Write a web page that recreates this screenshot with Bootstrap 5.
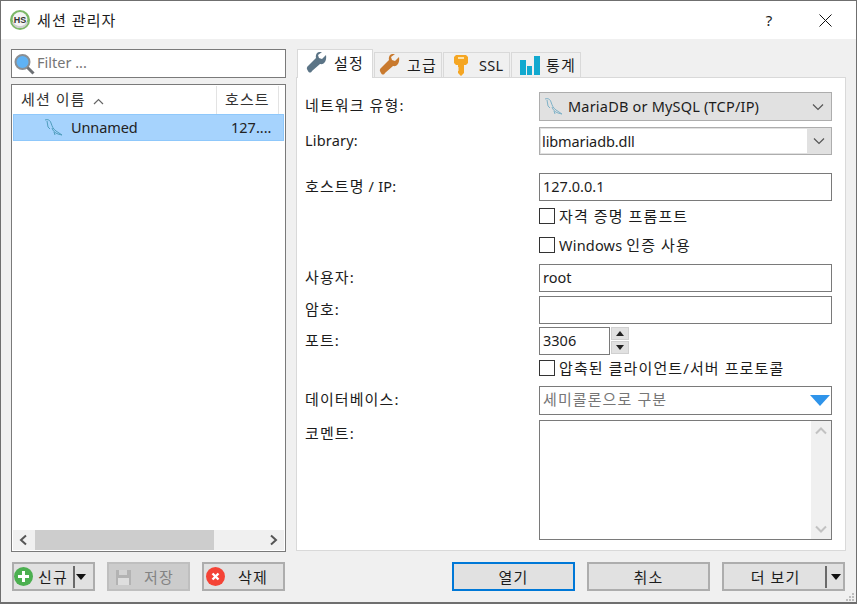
<!DOCTYPE html>
<html lang="ko"><head><meta charset="utf-8"><title>세션 관리자</title>
<link href="https://cdn.jsdelivr.net/npm/bootstrap@5.3.0/dist/css/bootstrap.min.css" rel="stylesheet">
<style>
html,body{height:100%;margin:0;background:#f0f0f0}
body{font:14.5px/20px "Noto Sans","Noto Sans CJK KR",sans-serif;color:#1c1c1c;overflow:hidden}
.ko{font-size:15px;letter-spacing:1.1px}
.win{width:857px;height:604px;border:1px solid #6f6f6f;border-bottom-width:2px;background:#f0f0f0;position:relative}
.ttl{height:38px;background:#fff;padding:0 0 0 9px}
.ttl .hlp{margin-left:auto;width:18px;text-align:center;font-size:15px}
.ttl .cls{margin:0 24px 0 41px}
.ttl .lg{margin-right:7px}
.main{padding:10px 10px 0 10px;gap:10px;height:512px}
.lft{width:275px}
.flt{height:29px;border:1px solid #7a7a7a;background:#fff;padding:0 0 3px 1px;gap:2px;color:#767676}
.flt svg{margin-bottom:-3px}
.tree{height:468px;margin-top:6px;border:1px solid #7a7a7a;background:#fff;padding:1px}
.thd{height:28px;color:#333}
.thd>div{border-right:1px solid #e3e3e3;height:28px;line-height:27px}
.thd .c1{width:204px;padding-left:8px}
.thd .c2{width:62px;padding-left:8px}
.sel{height:27px;background:#a6d3fd;border:1px solid #8fc8fb;padding:0 0 0 30px;color:#222;letter-spacing:-.1px}
.sel .nm{width:160px;margin-left:7px;padding-bottom:2px}
.sel .hs{padding-bottom:2px;letter-spacing:0}
.tsp{flex:1}
.hsb{height:20px;background:#f0f0f0;padding:0 6px}
.hsb i{display:block;width:179px;height:20px;background:#cdcdcd;margin-left:7px;margin-right:auto}
.rgt{width:550px}
.nav-tabs.tb{border-bottom:0;height:28px;align-items:flex-end;padding-left:1px;gap:1px;position:relative;z-index:1}
.tb .nav-link{height:25px;padding:0 0 0 4px;margin:0;border:1px solid #d9d9d9;border-bottom:0;border-radius:0;background:#f0f0f0;color:#1c1c1c;display:flex;align-items:center;gap:6px;font-size:14.5px;letter-spacing:.3px}
.tb .nav-link.active{height:29px;background:#fff;color:#1c1c1c;padding:0 0 3px 8px;margin-bottom:-1px;border-color:#d9d9d9}
.w1{width:76px}.w2{width:68px}.w3{width:67px}.w4{width:70px}
.w3 .nav-link{gap:5px}
.tb .nav-link.lnk{width:100%}
.pg{height:474px;background:#fff;border:1px solid #d9d9d9;padding:14px 0 0 8px;display:grid;grid-template-columns:234px 293px;grid-template-rows:35px 46px 35px 29px 27px 32px 31px 33px 26px 34px 120px;letter-spacing:.2px}
.lb{line-height:20px;margin-top:3px}
.fc.form-control{height:28px;border:1px solid #7a7a7a;border-radius:0;padding:0 3px 2px;font-size:14.5px;line-height:24px;color:#1c1c1c;box-shadow:none}
.cmbA{height:29px;background:#e1e1e1;border:1px solid #adadad;padding:0 5px 0 4px;gap:4px}
.cmbA span{padding-bottom:1px}
.cmbB{height:28px;background:#e1e1e1;border:1px solid #adadad;padding:1px}
.cmbB span{background:#fff;flex:1;height:24px;line-height:24px;padding-left:1px;letter-spacing:-.1px}
.cmbB svg{margin:0 5px 0 6px}
.cmbA svg:last-child{margin-left:auto;margin-right:2px}
.fc.form-control.pt{width:71px}
.spn{width:18px;height:28px;margin-left:1px;gap:1px}
.spn b{display:flex;align-items:center;justify-content:center;height:13px;width:18px;background:#e1e1e1;border:1px solid #d0d0d0}
.ck{gap:4px;height:16px;line-height:16px}
.ck .form-check-input{width:16px;height:16px;margin:0;border:1px solid #333;border-radius:0;flex:none}
.db{height:29px;border:1px solid #7a7a7a;color:#767676;padding:0 1px 3px 3px}
.db svg{margin-left:auto;margin-bottom:-3px}
.cmt{height:120px;border:1px solid #7a7a7a;background:#fff;justify-content:flex-end}
.vsb{width:20px;background:#f0f0f0;height:100%;justify-content:space-between;padding:6px 0}
.bbar{padding:11px 11px 0 11px;height:40px}
.bt.btn{height:29px;width:83px;border:2px solid #adadad;border-radius:0;background:#e1e1e1;color:#1c1c1c;font-size:14.5px;line-height:20px;padding:0 2px;display:flex;align-items:center;white-space:nowrap;--bs-btn-hover-bg:#e1e1e1}
.bt.btn.tight{padding:0}
.bt svg{flex:none}
.bt.wd{width:123px;justify-content:center}
.bt.dfl{border-color:#0078d7;margin-left:167px}
.bt.dis{background:#ccc;border-color:#bfbfbf;color:#838383;opacity:1}
.dv{width:2px;height:22px;background:#6a6a6a;flex:none}
.dvn{margin:0 1px 0 5px}
.gl{margin-left:12px}
.ms-new{margin-left:5px}
.grip{position:absolute;right:1px;bottom:0}
</style></head><body>
<div class="win">
<div class="ttl d-flex align-items-center">
<svg width="20" height="20" viewBox="0 0 19 19" class="lg"><circle cx="9.5" cy="9.5" r="9.5" fill="#7cb867"/><circle cx="9.5" cy="9" r="7" fill="#f4f4f4"/><path d="M2 12a8 8 0 0 0 15 0l-1-1a7 7 0 0 1-13 0z" fill="#cfcfcf"/><text x="9.5" y="12.4" font-size="8.5" font-weight="700" text-anchor="middle" fill="#333" font-family="Liberation Sans">HS</text></svg>
<span class="ko">세션 관리자</span>
<span class="hlp">?</span>
<svg class="cls" width="13" height="13" viewBox="0 0 13 13"><path d="M.5.5l12 12M12.5.5l-12 12" stroke="#111" stroke-width="1" fill="none"/></svg>
</div>
<div class="main d-flex">
<div class="lft">
<div class="flt d-flex align-items-center">
<svg width="22" height="24" viewBox="0 0 22 24"><circle cx="9.5" cy="10" r="7" fill="#5fb2f4" stroke="#8a8f94" stroke-width="2"/><path d="M14.5 15.5l6 6" stroke="#6c7074" stroke-width="3"/></svg>
<span>Filter ...</span></div>
<div class="tree d-flex flex-column">
<div class="thd d-flex">
<div class="c1"><span class="ko">세션 이름</span> <svg class="ms-1" width="11" height="7" viewBox="0 0 11 7"><path d="M1 6l4.500-4.500L10 6" stroke="#666" stroke-width="1.200" fill="none"/></svg></div>
<div class="c2"><span class="ko">호스트</span></div></div>
<div class="sel d-flex align-items-center">
<svg width="20" height="20" viewBox="0 0 20 20"><path d="M1 2c3-1 5 0 6 3 1 3 2 6 5 8l6 4-4-1c-3-1-5-3-6-6M3 3l1 6 2 2M10 14l1 3" stroke="#4f9dbd" stroke-width="1" fill="none"/></svg>
<span class="nm">Unnamed</span><span class="hs">127....</span></div>
<div class="tsp"></div>
<div class="hsb d-flex align-items-center">
<svg width="9" height="12" viewBox="0 0 9 12"><path d="M7 1.500L2 6l5 4.500" stroke="#555" stroke-width="2" fill="none"/></svg><i></i>
<svg width="9" height="12" viewBox="0 0 9 12"><path d="M2 1.500L7 6l-5 4.500" stroke="#555" stroke-width="2" fill="none"/></svg></div>
</div></div>
<div class="rgt">
<ul class="nav nav-tabs tb">
<li class="nav-item w1"><a class="nav-link lnk active" href="#"><svg width="22" height="22" viewBox="0 0 22 22"><path d="M20 3l-4 4-3-1-1-3 4-3c-4-1-7 2-6 6L2 14c-2 2-1 3 0 5s3 2 4 0l8-7c4 1 7-3 6-9z" fill="#5b7486"/></svg><span class="ko">설정</span></a></li>
<li class="nav-item w2"><a class="nav-link lnk" href="#"><svg width="22" height="22" viewBox="0 0 22 22"><path d="M20 3l-4 4-3-1-1-3 4-3c-4-1-7 2-6 6L2 14c-2 2-1 3 0 5s3 2 4 0l8-7c4 1 7-3 6-9z" fill="#c97a2e"/></svg><span class="ko">고급</span></a></li>
<li class="nav-item w3"><a class="nav-link lnk" href="#"><svg class="ms-1" width="18" height="22" viewBox="0 0 18 22"><path d="M2 3l2-2h10l2 2v6l-2 2h-2v8l-3 3-3-3v-2l1-1-1-1 1-1-1-1v-2H4L2 9z" fill="#f5a623"/><rect x="6" y="3" width="6" height="2" fill="#fde2a8"/></svg><span>&nbsp;SSL</span></a></li>
<li class="nav-item w4"><a class="nav-link lnk" href="#"><svg class="ms-1" width="20" height="20" viewBox="0 0 20 20"><path d="M0 5h6v15H0zM7 11h5v9H7zM14 1h6v19h-6z" fill="#12a9cf"/></svg><span class="ko">통계</span></a></li>
</ul>
<div class="pg">
<div class="lb"><span class="ko">네트워크 유형:</span></div>
<div class="cmbA d-flex align-items-center"><svg width="20" height="20" viewBox="0 0 20 20"><path d="M1 2c3-1 5 0 6 3 1 3 2 6 5 8l6 4-4-1c-3-1-5-3-6-6M3 3l1 6 2 2M10 14l1 3" stroke="#7fb2c8" stroke-width="1" fill="none"/></svg><span>MariaDB or MySQL (TCP/IP)</span><svg width="12" height="8" viewBox="0 0 12 8"><path d="M1 1.500l5 5 5-5" stroke="#555" stroke-width="1.200" fill="none"/></svg></div>
<div class="lb">Library:</div>
<div class="cmbB d-flex align-items-center"><span>libmariadb.dll</span><svg width="12" height="8" viewBox="0 0 12 8"><path d="M1 1.500l5 5 5-5" stroke="#555" stroke-width="1.200" fill="none"/></svg></div>
<div class="lb"><span class="ko">호스트명</span> / IP:</div>
<input class="form-control fc" value="127.0.0.1">
<div></div>
<label class="ck d-flex align-items-center"><input type="checkbox" class="form-check-input"><span class="ko">자격 증명 프롬프트</span></label>
<div></div>
<label class="ck d-flex align-items-center"><input type="checkbox" class="form-check-input"><span>Windows <span class="ko">인증 사용</span></span></label>
<div class="lb"><span class="ko">사용자:</span></div>
<input class="form-control fc" value="root">
<div class="lb"><span class="ko">암호:</span></div>
<input class="form-control fc" value="">
<div class="lb"><span class="ko">포트:</span></div>
<div class="d-flex"><input class="form-control fc pt" value="3306"><div class="spn d-flex flex-column"><b><svg width="8" height="5" viewBox="0 0 8 5"><path d="M4 0l4 5H0z" fill="#222"/></svg></b><b><svg width="8" height="5" viewBox="0 0 8 5"><path d="M0 0h8L4 5z" fill="#222"/></svg></b></div></div>
<div></div>
<label class="ck d-flex align-items-center"><input type="checkbox" class="form-check-input"><span class="ko">압축된 클라이언트/서버 프로토콜</span></label>
<div class="lb"><span class="ko">데이터베이스:</span></div>
<div class="db d-flex align-items-center"><span class="ko">세미콜론으로 구분</span><svg width="20" height="11" viewBox="0 0 20 11"><path d="M0 0h20L10 11z" fill="#2f94ea"/></svg></div>
<div class="lb"><span class="ko">코멘트:</span></div>
<div class="cmt d-flex"><div class="vsb d-flex flex-column align-items-center"><svg width="12" height="8" viewBox="0 0 12 8"><path d="M1 6.500l5-5 5 5" stroke="#c2c2c2" stroke-width="2" fill="none"/></svg><svg width="12" height="8" viewBox="0 0 12 8"><path d="M1 1.500l5 5 5-5" stroke="#c2c2c2" stroke-width="2" fill="none"/></svg></div></div>
</div></div></div>
<div class="bbar d-flex">
<button class="btn bt tight" type="button"><svg width="19" height="19" viewBox="0 0 19 19"><circle cx="9.500" cy="9.500" r="9.500" fill="#4caf50"/><path d="M8 4h3v4h4v3h-4v4H8v-4H4V8h4z" fill="#fff"/></svg><span class="ms-new ko">신규</span><i class="dv dvn"></i><svg width="10" height="6" viewBox="0 0 10 6"><path d="M0 0h10L5 6z" fill="#111"/></svg></button>
<button class="btn bt dis gl" type="button" disabled><svg class="ms-1" width="17" height="17" viewBox="0 0 17 17"><path d="M1 2h15v15H1z" fill="#b3b3b3"/><path d="M4 2h8v5H4z" fill="#d3d3d3"/><path d="M3 10h11v7H3z" fill="#dedede"/></svg><span class="mx-auto ko">저장</span></button>
<button class="btn bt gl" type="button"><svg width="19" height="19" viewBox="0 0 19 19"><circle cx="9.500" cy="9.500" r="9.500" fill="#f44336"/><path d="M6.500 6.500l6 6M12.500 6.500l-6 6" stroke="#fff" stroke-width="2.400"/></svg><span class="mx-auto ko">삭제</span></button>
<button class="btn bt wd dfl" type="button"><span class="ko">열기</span></button>
<button class="btn bt wd gl" type="button"><span class="ko">취소</span></button>
<button class="btn bt wd gl" type="button"><span class="mx-auto ko">더 보기</span><i class="dv"></i><svg class="ms-1" width="10" height="6" viewBox="0 0 10 6"><path d="M0 0h10L5 6z" fill="#111"/></svg></button>
</div>
<svg class="grip" width="10" height="10" viewBox="0 0 10 10"><path d="M7 1h2v2H7zM4 4h2v2H4zM7 4h2v2H7zM1 7h2v2H1zM4 7h2v2H4zM7 7h2v2H7z" fill="#bdbdbd"/></svg>
</div>
</body></html>
